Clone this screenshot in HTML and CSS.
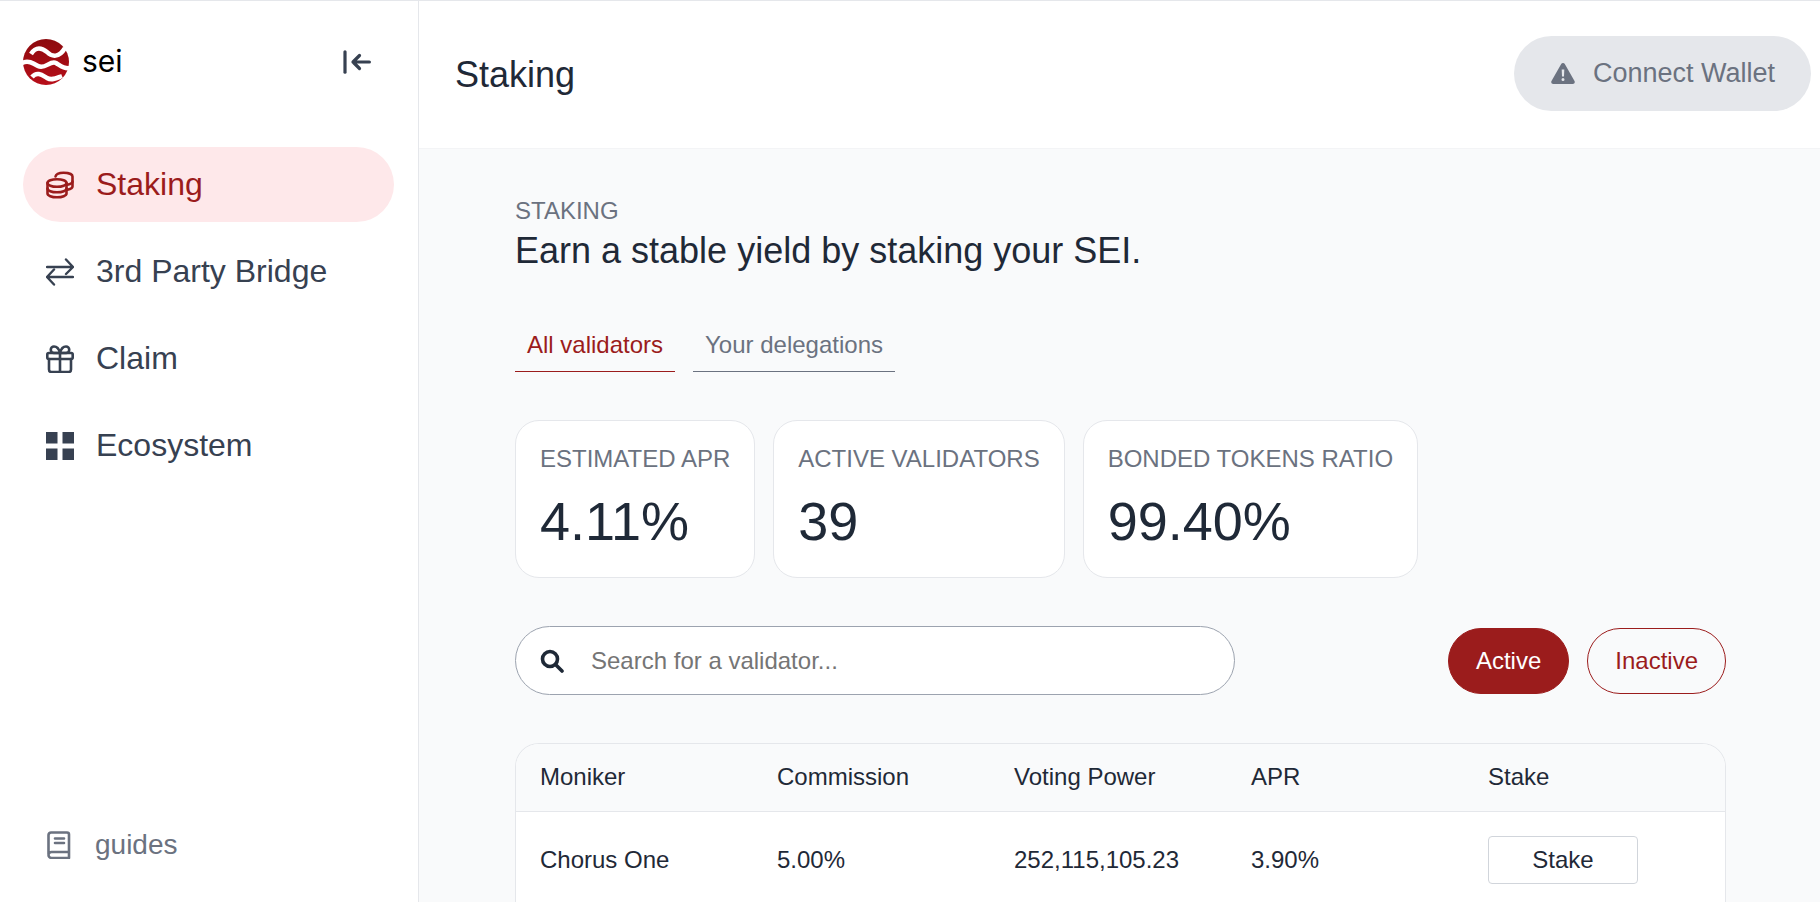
FILE: index.html
```html
<!DOCTYPE html>
<html lang="en">
<head>
  <meta charset="UTF-8">
  <meta name="viewport" content="width=device-width, initial-scale=1.0">
  <title>Sei Staking</title>
  <link rel="stylesheet" href="styles.css">
</head>

<body>
  <div class="app">
    <!-- ===== SIDEBAR ===== -->
    <aside class="sidebar">
      <div class="brand-row">
        <div class="brand">
          <svg class="brand-logo" viewBox="0 0 46 46">
            <defs>
              <linearGradient id="sei-red" x1="0" y1="0" x2="0" y2="1">
                <stop offset="0" stop-color="#8c0a0e"/>
                <stop offset="1" stop-color="#b80f1a"/>
              </linearGradient>
            </defs>
            <circle cx="23" cy="23" r="23" fill="url(#sei-red)"/>
            <path d="M8 15 C13 7 19 9 24 13 C29 18 36 19 42 9" fill="none" stroke="#fff" stroke-width="4.500"/>
            <path d="M-1 24 C5 21 10 24 15 27 C22 31 27 21 33 24 C38 27 41 30 47 29" fill="none" stroke="#fff" stroke-width="4.500"/>
            <path d="M9 38 C14 32 19 36 24 39 C29 42 34 39 39 37" fill="none" stroke="#fff" stroke-width="4.500"/>
          </svg>
          <span class="brand-name">sei</span>
        </div>
        <svg class="collapse-icon" viewBox="0 0 28 24" fill="none" stroke="#374151" stroke-width="3.200" stroke-linecap="round" stroke-linejoin="round">
          <path d="M2 1.800V22.200"/>
          <path d="M26.400 12H10M16.500 5.500L10 12l6.500 6.500"/>
        </svg>
      </div>

      <nav class="nav">
        <a class="nav-item active">
          <svg class="nav-icon" viewBox="0 0 28 28" fill="none" stroke="currentColor" stroke-width="2.600" stroke-linecap="round" stroke-linejoin="round">
            <ellipse cx="11" cy="12" rx="9.500" ry="3.800"/>
            <path d="M1.500 12v10.500c0 2.100 4.200 3.800 9.500 3.800s9.500-1.700 9.500-3.800V12"/>
            <path d="M1.500 17.500c0 2.100 4.200 3.800 9.500 3.800s9.500-1.700 9.500-3.800"/>
            <path d="M9.500 5.500c.5-2.300 4-3.800 8-3.800 5 0 9 1.500 9 3.800v10c0 1.400-2 2.600-5 3.200"/>
            <path d="M26.500 10.500c0 1.400-2 2.600-5 3.200"/>
          </svg>
          <span>Staking</span>
        </a>
        <a class="nav-item">
          <svg class="nav-icon" viewBox="0 0 28 28" fill="none" stroke="currentColor" stroke-width="2.400" stroke-linecap="round" stroke-linejoin="round">
            <path d="M1 9h26M20 1.500L27 9l-7 7"/>
            <path d="M27 19H1M8 11.500L1 19l7 7.500"/>
          </svg>
          <span>3rd Party Bridge</span>
        </a>
        <a class="nav-item">
          <svg class="nav-icon" viewBox="0 0 28 28" fill="none" stroke="currentColor" stroke-width="2.600" stroke-linecap="round" stroke-linejoin="round">
            <rect x="1.300" y="8" width="25.400" height="6" rx="1.500"/>
            <path d="M3 14v10.500A2.500 2.500 0 0 0 5.500 27h17a2.500 2.500 0 0 0 2.500-2.500V14"/>
            <path d="M14 8v19"/>
            <path d="M14 8c-1-4-3.500-6.500-6-6.500a3.200 3.200 0 0 0 0 6.500zM14 8c1-4 3.500-6.500 6-6.500a3.200 3.200 0 0 1 0 6.500z"/>
          </svg>
          <span>Claim</span>
        </a>
        <a class="nav-item">
          <svg class="nav-icon" viewBox="0 0 28 28" fill="currentColor">
            <rect x="0" y="0" width="11.500" height="11.500"/>
            <rect x="16.500" y="0" width="11.500" height="11.500"/>
            <rect x="0" y="16.500" width="11.500" height="11.500"/>
            <rect x="16.500" y="16.500" width="11.500" height="11.500"/>
          </svg>
          <span>Ecosystem</span>
        </a>
      </nav>

      <a class="guides">
        <svg class="guides-icon" viewBox="0 0 24 28" fill="none" stroke="currentColor" stroke-width="2.600" stroke-linecap="round" stroke-linejoin="round">
          <path d="M1.500 23V4a2.500 2.500 0 0 1 2.500-2.500h16a2 2 0 0 1 2 2V21H4.500a3 3 0 0 0 0 6H22v-6"/>
          <path d="M8 7.500h9M8 12h9"/>
        </svg>
        <span>guides</span>
      </a>
    </aside>

    <!-- ===== MAIN ===== -->
    <div class="main">
      <header class="topbar">
        <h1 class="page-title">Staking</h1>
        <button class="wallet-btn">
          <svg class="wallet-icon" viewBox="0 0 24 21" fill="currentColor">
            <path fill-rule="evenodd" d="M12 0c.8 0 1.400.4 1.800 1l9.700 17c.8 1.400-.2 3-1.800 3H2.300C.7 21-.3 19.400.5 18l9.700-17c.4-.6 1-1 1.800-1zm-1.300 6.500l.3 7h2l.3-7zM12 15a1.500 1.500 0 1 0 0 3 1.500 1.500 0 0 0 0-3z"/>
          </svg>
          <span>Connect Wallet</span>
        </button>
      </header>

      <main class="content">
        <p class="eyebrow">STAKING</p>
        <h2 class="headline">Earn a stable yield by staking your SEI.</h2>

        <div class="tabs">
          <a class="tab current">All validators</a>
          <a class="tab">Your delegations</a>
        </div>

        <div class="stats">
          <div class="stat">
            <div class="stat-label">ESTIMATED APR</div>
            <div class="stat-value">4.11%</div>
          </div>
          <div class="stat">
            <div class="stat-label">ACTIVE VALIDATORS</div>
            <div class="stat-value">39</div>
          </div>
          <div class="stat">
            <div class="stat-label">BONDED TOKENS RATIO</div>
            <div class="stat-value">99.40%</div>
          </div>
        </div>

        <div class="filters">
          <label class="search">
            <svg class="search-icon" viewBox="0 0 24 24" fill="none" stroke="#1f2937" stroke-width="3.600" stroke-linecap="round">
              <circle cx="10" cy="10" r="7.500"/>
              <path d="M16 16l6 6"/>
            </svg>
            <input class="search-input" type="text" placeholder="Search for a validator...">
          </label>
          <div class="status-btns">
            <button class="pill pill-on">Active</button>
            <button class="pill">Inactive</button>
          </div>
        </div>

        <div class="table-card">
          <div class="table-row table-head">
            <div>Moniker</div>
            <div>Commission</div>
            <div>Voting Power</div>
            <div>APR</div>
            <div>Stake</div>
          </div>
          <div class="table-row">
            <div>Chorus One</div>
            <div>5.00%</div>
            <div>252,115,105.23</div>
            <div>3.90%</div>
            <div><button class="stake-btn">Stake</button></div>
          </div>
        </div>
      </main>
    </div>
  </div>
</body>
</html>
```

FILE: styles.css
```css
/* ---------------- Page ---------------- */
html, body {
  margin: 0; padding: 0;
  width: 100%; height: 100%;
  overflow: hidden;
  background: #fff;
  font-family: "Liberation Sans", Arial, sans-serif;
  color: #1f2937;
}

* { box-sizing: border-box; }

.app {
  display: flex;
  height: 902px;
  border-top: 1px solid #e5e7eb;
}

/* ---------------- Sidebar ---------------- */
.sidebar {
  flex: 0 0 419px;
  display: flex;
  flex-direction: column;
  padding: 0 24px 0 23px;
  border-right: 1px solid #e5e7eb;
  background: #fff;
}

.brand-row {
  display: flex;
  align-items: center;
  justify-content: space-between;
  height: 122px;
  padding: 0 23px 0 0;
}
.brand { display: flex; align-items: center; gap: 13px; }
.brand-logo { width: 46px; height: 46px; display: block; }
.brand-name {
  margin-bottom: 2px;
  font: 400 30px/1 Inter, sans-serif;
  color: #000;
}
.collapse-icon { width: 28px; height: 24px; display: block; }

.nav { display: flex; flex-direction: column; gap: 12px; margin-top: 24px; }
.nav-item {
  display: flex;
  align-items: center;
  gap: 22px;
  height: 75px;
  padding: 0 23px;
  border-radius: 38px;
  font-size: 32px;
  color: #374151;
  cursor: pointer;
}
.nav-item.active { background: #fee8ea; color: #9b1c1c; }
.nav-icon { width: 28px; height: 28px; display: block; flex: none; }

.guides {
  display: flex;
  align-items: center;
  gap: 24px;
  margin-top: auto;
  margin-bottom: 41px;
  padding-left: 24px;
  font-size: 28px;
  color: #6b7280;
  cursor: pointer;
}
.guides-icon { width: 24px; height: 28px; display: block; flex: none; }

/* ---------------- Main ---------------- */
.main { flex: 1; display: flex; flex-direction: column; min-width: 0; min-height: 0; background: #f9fafb; }

.topbar {
  flex: 0 0 148px;
  display: flex;
  align-items: center;
  justify-content: space-between;
  padding: 0 9px 0 36px;
  background: #fff;
  border-bottom: 1px solid #f3f4f6;
}
.page-title { margin: 0; font-size: 36px; font-weight: 400; color: #1f2937; }

.wallet-btn {
  display: flex;
  align-items: center;
  gap: 18px;
  height: 75px;
  margin-bottom: 2px;
  padding: 0 36px 0 37px;
  border: none;
  border-radius: 38px;
  background: #e5e7eb;
  font: 27px "Liberation Sans", Arial, sans-serif;
  color: #6b7280;
}
.wallet-icon { width: 24px; height: 21px; display: block; }

.content {
  flex: 1;
  min-height: 0;
  display: flex;
  flex-direction: column;
  padding: 48px 94px 0 96px;
}

.eyebrow { margin: 0; font-size: 24px; line-height: 28px; color: #6b7280; }
.headline { margin: 5px 0 0; font-size: 36px; line-height: 42px; font-weight: 400; color: #1f2937; }

/* ---------------- Tabs ---------------- */
.tabs { display: flex; gap: 18px; margin-top: 47px; }
.tab {
  padding: 12px 12px 12px;
  border-bottom: 1px solid #6b7280;
  font-size: 24px;
  line-height: 28px;
  color: #6b7280;
  cursor: pointer;
}
.tab.current { color: #9b1c1c; border-bottom-color: #9b1c1c; }

/* ---------------- Stat cards ---------------- */
.stats { display: flex; gap: 18px; margin-top: 48px; }
.stat {
  padding: 22px 24px 20px;
  background: #fff;
  border: 1px solid #e5e7eb;
  border-radius: 24px;
}
.stat-label { font-size: 24px; line-height: 32px; color: #6b7280; white-space: nowrap; }
.stat-value { margin-top: 10px; font-size: 54px; line-height: 72px; color: #1f2937; }

/* ---------------- Search + status ---------------- */
.filters { display: flex; align-items: center; justify-content: space-between; margin-top: 48px; }
.search {
  display: flex;
  align-items: center;
  gap: 25px;
  width: 720px;
  height: 69px;
  padding: 0 24px;
  background: #fff;
  border: 1px solid #9ca3af;
  border-radius: 35px;
}
.search-icon { width: 24px; height: 24px; display: block; flex: none; }
.search-input {
  flex: 1;
  min-width: 0;
  border: none;
  outline: none;
  background: transparent;
  font: 24px "Liberation Sans", Arial, sans-serif;
  color: #1f2937;
}
.search-input::placeholder { color: #757575; opacity: 1; }

.status-btns { display: flex; gap: 18px; }
.pill {
  height: 66px;
  padding: 0 27px;
  border: 1px solid #9b1c1c;
  border-radius: 33px;
  background: transparent;
  font: 24px "Liberation Sans", Arial, sans-serif;
  color: #9b1c1c;
}
.pill-on { background: #9b1c1c; color: #fff; }

/* ---------------- Table ---------------- */
.table-card {
  flex: 1;
  min-height: 0;
  margin-top: 48px;
  background: #fff;
  border: 1px solid #e5e7eb;
  border-bottom: none;
  border-radius: 24px 24px 0 0;
  overflow: hidden;
}
.table-row {
  display: grid;
  grid-template-columns: repeat(5, 237px);
  align-items: center;
  padding: 0 24px;
  font-size: 24px;
  color: #1f2937;
}
.table-head { height: 68px; padding-bottom: 2px; background: #f9fafb; border-bottom: 1px solid #e5e7eb; }
.table-row:not(.table-head) { height: 95px; }

.stake-btn {
  width: 150px;
  height: 48px;
  background: #fff;
  border: 1px solid #d1d5db;
  border-radius: 4px;
  font: 24px "Liberation Sans", Arial, sans-serif;
  color: #1f2937;
}
```
